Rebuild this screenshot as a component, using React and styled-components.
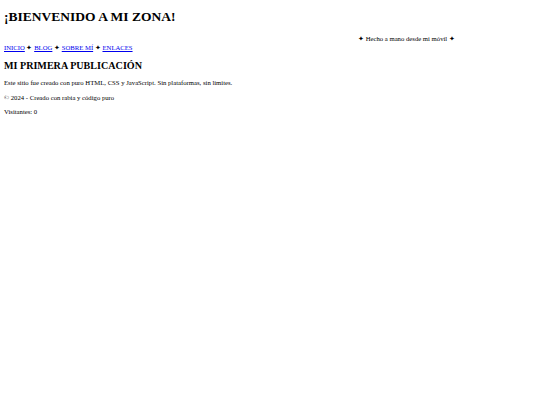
import React from 'react';
import styled, { createGlobalStyle } from 'styled-components';

const GlobalStyle = createGlobalStyle`
  html, body {
    margin: 0;
    padding: 0;
    background: #ffffff;
  }
  body {
    padding: 0 4px;
    font-family: "Liberation Serif", "Times New Roman", serif;
    color: #000000;
  }
`;

const Page = styled.div`
  display: flex;
  flex-direction: column;
`;

const Title = styled.h1`
  font-size: 13.5px;
  line-height: 18px;
  font-weight: bold;
  margin: 8px 0 0;
`;

const Ticker = styled.div`
  font-size: 6.7px;
  line-height: 9px;
  margin-top: 8px;
  padding-left: 354px;
  white-space: nowrap;
`;

const Nav = styled.nav`
  font-size: 6.7px;
  line-height: 10px;
`;

const NavLink = styled.a`
  color: #0000ee;
  text-decoration: underline;
`;

const PostTitle = styled.h2`
  font-size: 10.1px;
  line-height: 14px;
  font-weight: bold;
  margin: 6px 0 0;
`;

const Text = styled.p`
  font-size: 6.7px;
  line-height: 10px;
  margin: ${(p) => p.$top}px 0 0;
`;

const links = ['INICIO', 'BLOG', 'SOBRE MÍ', 'ENLACES'];

export default function App() {
  return (
    <Page>
      <GlobalStyle />
      <Title>¡BIENVENIDO A MI ZONA!</Title>
      <Ticker>✦ Hecho a mano desde mi móvil ✦</Ticker>
      <Nav>
        {links.map((l, i) => (
          <React.Fragment key={l}>
            {i > 0 && ' ✦ '}
            <NavLink href="#">{l}</NavLink>
          </React.Fragment>
        ))}
      </Nav>
      <PostTitle>MI PRIMERA PUBLICACIÓN</PostTitle>
      <Text $top={5}>
        Este sitio fue creado con puro HTML, CSS y JavaScript. Sin plataformas, sin límites.
      </Text>
      <Text $top={5}>© 2024 - Creado con rabia y código puro</Text>
      <Text $top={4}>Visitantes: 0</Text>
    </Page>
  );
}
